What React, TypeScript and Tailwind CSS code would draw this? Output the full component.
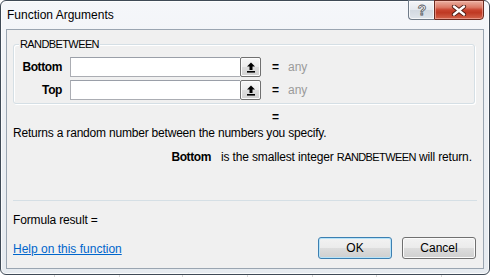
import React from "react";

function UpArrow() {
  return (
    <svg width="10" height="11" viewBox="0 0 10 11">
      <path d="M5 0.5 L9 4.5 H6.5 V8 H3.5 V4.5 H1 Z" fill="#000" />
      <rect x="1" y="9" width="8" height="1.6" fill="#000" />
    </svg>
  );
}

function ArgRow({ label }: { label: string }) {
  return (
    <div className="flex items-center h-[20px]">
      <span className="w-[48px] text-right font-bold tracking-[-0.4px]">{label}</span>
      <div className="ml-[8px] flex h-[20px]">
        <div className="w-[170px] h-[20px] bg-white border border-[#abadb3] border-r-0 border-t-[#9a9fa8]" />
        <div className="w-[21px] h-[20px] border border-[#707070] rounded-[2px] bg-[linear-gradient(180deg,#f7f7f7_0%,#ededed_50%,#dedede_50%,#d2d2d2_100%)] shadow-[inset_0_0_0_1px_#fcfcfc] flex items-center justify-center">
          <UpArrow />
        </div>
      </div>
      <span className="ml-[11px] w-[16px] font-bold">=</span>
      <span className="text-[#9b9b9b]">any</span>
    </div>
  );
}

export default function App() {
  return (
    <div className="w-[492px] h-[277px] bg-white font-['Liberation_Sans',Arial,sans-serif] text-[12px] leading-[14px] text-black overflow-hidden whitespace-nowrap">
      <div className="w-[490px] h-[275px] rounded-[6px] border border-[#3f4a56] bg-[linear-gradient(180deg,#f5f7fa_0%,#edf0f4_40%,#e6ebf0_100%)] shadow-[inset_0_0_0_1px_rgba(255,255,255,0.8)] flex flex-col">
        {/* title bar */}
        <div className="h-[28px] flex items-start pl-[6px] pr-[5px]">
          <span className="mt-[7px]">Function Arguments</span>
          <div className="ml-auto flex -mt-[1px]">
            <div className="w-[26px] h-[20px] border border-[#6f7b88] border-r-0 rounded-bl-[4px] bg-[linear-gradient(180deg,#f4f6f8_0%,#e4e9ee_48%,#d2d9e1_52%,#dfe5eb_100%)] shadow-[inset_0_0_0_1px_rgba(255,255,255,0.7)] flex items-center justify-center">
              <svg width="12" height="14" viewBox="0 0 12 14">
                <text x="6" y="12" textAnchor="middle" fontFamily="Liberation Sans, Arial, sans-serif" fontWeight="bold" fontSize="14" fill="#ffffff" stroke="#55595e" strokeWidth="0.8">?</text>
              </svg>
            </div>
            <div className="w-[50px] h-[20px] border border-[#6a2a20] rounded-br-[4px] bg-[linear-gradient(180deg,#eab0a2_0%,#dc7a66_35%,#c8432e_50%,#bf3923_65%,#d3634b_100%)] shadow-[inset_0_0_0_1px_rgba(255,200,190,0.5)] flex items-center justify-center">
              <svg width="16" height="11" viewBox="0 0 16 11">
                <path d="M3 1.5 L13 9.5 M13 1.5 L3 9.5" stroke="#4b1b14" strokeWidth="4.2" strokeLinecap="round" />
                <path d="M3 1.5 L13 9.5 M13 1.5 L3 9.5" stroke="#ffffff" strokeWidth="2.4" strokeLinecap="round" />
              </svg>
            </div>
          </div>
        </div>
        {/* content panel */}
        <div className="mx-[5px] h-[240px] border border-[#9aa5b1] bg-[#f0f0f0] flex flex-col">
          <div className="ml-[6px] mt-[14px] w-[462px] h-[60px] relative border border-[#d5dfe5] rounded-[3px] shadow-[inset_1px_1px_0_#ffffff,1px_1px_0_#ffffff]">
            <span className="absolute left-[5px] -top-[8px] px-[1px] bg-[#f0f0f0] text-[11px] tracking-[-0.6px]">RANDBETWEEN</span>
            <div className="flex flex-col pt-[12px] gap-[3px]">
              <ArgRow label="Bottom" />
              <ArgRow label="Top" />
            </div>
          </div>
          <div className="mt-[6px] pl-[265px] font-bold">=</div>
          <div className="mt-[2px] pl-[6px] tracking-[-0.2px]">Returns a random number between the numbers you specify.</div>
          <div className="mt-[10px] flex">
            <span className="w-[204px] text-right font-bold tracking-[-0.4px]">Bottom</span>
            <span className="ml-[10px] tracking-[-0.15px]">
              is the smallest integer <span className="text-[11px] tracking-[-0.6px]">RANDBETWEEN</span> will return.
            </span>
          </div>
          <div className="mt-[36px] ml-[6px] w-[464px] h-[1px] bg-[#d5dfe5]" />
          <div className="mt-[12px] pl-[6px] tracking-[-0.15px]">Formula result =</div>
          <div className="mt-[10px] flex items-start pl-[6px] pr-[7px]">
            <a className="mt-[5px] underline text-[#0066cc]" href="#">Help on this function</a>
            <button className="ml-auto w-[74px] h-[22px] border border-[#3c7fb1] rounded-[3px] bg-[linear-gradient(180deg,#f2f2f2_0%,#ebebeb_50%,#dddddd_50%,#cfcfcf_100%)] shadow-[inset_0_0_0_1px_#b6e3f9] text-[12px] leading-[14px]">OK</button>
            <button className="ml-[10px] w-[74px] h-[22px] border border-[#707070] rounded-[3px] bg-[linear-gradient(180deg,#f2f2f2_0%,#ebebeb_50%,#dddddd_50%,#cfcfcf_100%)] shadow-[inset_0_0_0_1px_#fbfbfb] text-[12px] leading-[14px]">Cancel</button>
          </div>
        </div>
      </div>
      <div className="flex h-[2px] bg-white">
        <div className="w-[55px] border-r border-[#d8d8d8]" />
        <div className="w-[65px] border-r border-[#d8d8d8]" />
        <div className="w-[63px] border-r border-[#d8d8d8]" />
        <div className="w-[65px] border-r border-[#d8d8d8]" />
        <div className="w-[65px] border-r border-[#d8d8d8]" />
        <div className="w-[64px] border-r border-[#d8d8d8]" />
        <div className="w-[65px] border-r border-[#d8d8d8]" />
      </div>
    </div>
  );
}
